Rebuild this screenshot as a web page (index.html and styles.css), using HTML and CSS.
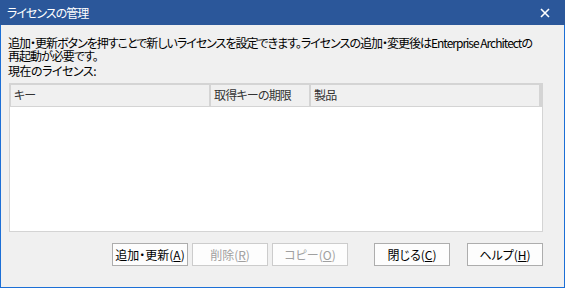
FILE: index.html
```html
<!DOCTYPE html>
<html lang="ja">
<head>
  <meta charset="UTF-8" />
  <title>ライセンスの管理</title>
  <link rel="stylesheet" href="styles.css">
</head>
<body>
  <div class="window">
    <div class="titlebar">
      <span class="title">ライセンスの管理</span>
      <span class="close">
        <svg width="10" height="10" viewBox="0 0 10 10"><path d="M1 1L9 9M9 1L1 9" stroke="#fff" stroke-width="1.6" /></svg>
      </span>
    </div>

    <div class="content">
      <p class="info">追加・更新ボタンを押すことで新しいライセンスを設定できます。ライセンスの追加・変更後はEnterprise Architectの<br>再起動が必要です。</p>
      <div class="caption">現在のライセンス:</div>

      <div class="listview">
        <div class="header">
          <div class="col col-key">キー</div>
          <div class="col col-expire">取得キーの期限</div>
          <div class="col col-product">製品</div>
          <div class="col col-fill"></div>
        </div>
        <div class="rows"></div>
      </div>

      <div class="buttons">
        <button class="btn">追加・更新(<u>A</u>)</button>
        <button class="btn" disabled>削除(<u>R</u>)</button>
        <button class="btn" disabled>コピー(<u>O</u>)</button>
        <button class="btn btn-close">閉じる(<u>C</u>)</button>
        <button class="btn btn-help">ヘルプ(<u>H</u>)</button>
      </div>
    </div>
  </div>
</body>
</html>
```

FILE: styles.css
```css
* {
  box-sizing: border-box;
}
body {
  margin: 0;
  font-family: "Noto Sans CJK JP", "Noto Sans", sans-serif;
  font-size: 12px;
  font-feature-settings: "palt";
  color: #000;
  background: #fff;
}
.window {
  width: 565px;
  height: 288px;
  display: flex;
  flex-direction: column;
  background: #f0f0f0;
  border: 1px solid #1c6fd6;
  border-top: none;
}
.titlebar {
  height: 25px;
  margin: 0 -1px;
  display: flex;
  align-items: center;
  justify-content: space-between;
  background: #2b579a;
  color: #fff;
  padding: 0 15px 0 7px;
}
.title {
  font-size: 12px;
  line-height: 14px;
  letter-spacing: -1px;
}
.close {
  display: flex;
}
.content {
  flex: 1;
  padding: 0 21px 0 8px;
}
.info {
  margin: 11px 0 0 -1px;
  line-height: 13px;
  letter-spacing: -1px;
  white-space: nowrap;
}
.caption {
  margin: 2px 0 0 -1px;
  line-height: 13px;
  letter-spacing: -0.5px;
}
.listview {
  margin-top: 6px;
  height: 149px;
  background: #fff;
  border: 1px solid #d4d4d4;
  display: flex;
  flex-direction: column;
}
.header {
  display: flex;
  height: 23px;
  background: #f0f0f0;
}
.col {
  border: 1px solid #d4d4d4;
  padding: 0 3px;
  line-height: 20px;
  color: #333;
  letter-spacing: -0.8px;
}
.col-key { width: 200px; }
.col-expire { width: 100px; }
.col-product { width: 230px; }
.col-fill {
  flex: 1;
  padding: 0;
  background: #d4d4d4;
}
.rows {
  flex: 1;
}
.buttons {
  display: flex;
  justify-content: flex-end;
  gap: 4px;
  margin-top: 11px;
}
.btn {
  width: 76px;
  height: 23px;
  padding: 0;
  font: inherit;
  color: #000;
  background: #fdfdfd;
  border: 1px solid #adadad;
  border-radius: 0;
}
.btn u {
  text-underline-offset: 1px;
}
.btn:disabled {
  color: #a0a0a0;
  border-color: #cccccc;
}
.btn-close {
  margin-left: 22px;
}
.btn-help {
  margin-left: 13px;
}
```
